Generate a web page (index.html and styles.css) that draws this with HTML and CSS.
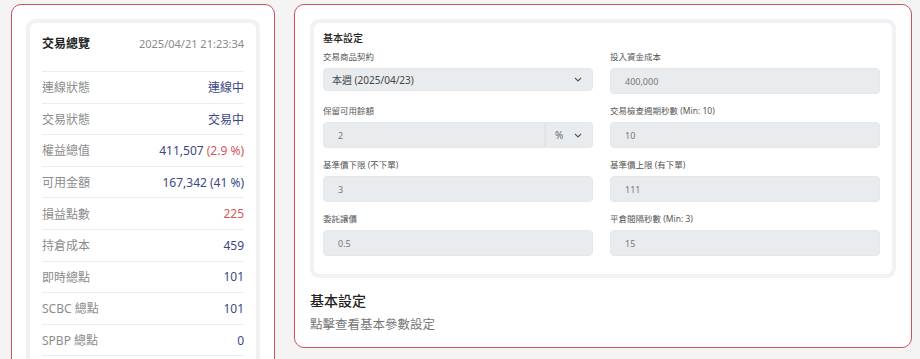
FILE: index.html
```html
<!DOCTYPE html>
<html lang="zh-Hant">
<head>
<meta charset="utf-8">
<title>交易總覽</title>
<link rel="stylesheet" href="styles.css">
</head>
<body>
<div class="page">
  <section class="card card-left">
    <div class="frame">
      <div class="panel overview">
        <div class="ov-head">
          <span class="ov-title">交易總覽</span>
          <span class="ov-time">2025/04/21 21:23:34</span>
        </div>
        <div class="ov-row"><span class="ov-label">連線狀態</span><span class="ov-value">連線中</span></div>
        <div class="ov-row"><span class="ov-label">交易狀態</span><span class="ov-value">交易中</span></div>
        <div class="ov-row"><span class="ov-label">權益總值</span><span class="ov-value">411,507 <span class="red">(2.9 %)</span></span></div>
        <div class="ov-row"><span class="ov-label">可用金額</span><span class="ov-value">167,342 (41 %)</span></div>
        <div class="ov-row"><span class="ov-label">損益點數</span><span class="ov-value red">225</span></div>
        <div class="ov-row"><span class="ov-label">持倉成本</span><span class="ov-value">459</span></div>
        <div class="ov-row"><span class="ov-label">即時總點</span><span class="ov-value">101</span></div>
        <div class="ov-row"><span class="ov-label">SCBC 總點</span><span class="ov-value">101</span></div>
        <div class="ov-row"><span class="ov-label">SPBP 總點</span><span class="ov-value">0</span></div>
        <div class="ov-row ov-spacer"></div>
      </div>
    </div>
  </section>

  <section class="card card-right">
    <div class="frame">
      <div class="panel form">
        <div class="form-title">基本設定</div>
        <div class="form-grid">
          <div class="field">
            <label class="field-label">交易商品契約</label>
            <div class="select">
              <span class="select-text">本週 (2025/04/23)</span>
              <svg class="chev" width="8" height="5" viewBox="0 0 8 5"><polyline points="1,1 4,4 7,1" fill="none" stroke="#555" stroke-width="1.1"/></svg>
            </div>
          </div>
          <div class="field">
            <label class="field-label">投入資金成本</label>
            <div class="input">400,000</div>
          </div>
          <div class="field">
            <label class="field-label">保留可用餘額</label>
            <div class="input-group">
              <div class="input ig-main">2</div>
              <div class="ig-addon">
                <span>%</span>
                <svg class="chev" width="8" height="5" viewBox="0 0 8 5"><polyline points="1,1 4,4 7,1" fill="none" stroke="#555" stroke-width="1.1"/></svg>
              </div>
            </div>
          </div>
          <div class="field">
            <label class="field-label">交易檢查週期秒數 (Min: 10)</label>
            <div class="input">10</div>
          </div>
          <div class="field">
            <label class="field-label">基準價下限 (不下單)</label>
            <div class="input">3</div>
          </div>
          <div class="field">
            <label class="field-label">基準價上限 (有下單)</label>
            <div class="input">111</div>
          </div>
          <div class="field">
            <label class="field-label">委託讓價</label>
            <div class="input">0.5</div>
          </div>
          <div class="field">
            <label class="field-label">平倉間隔秒數 (Min: 3)</label>
            <div class="input">15</div>
          </div>
        </div>
      </div>
    </div>
    <h3 class="card-title">基本設定</h3>
    <p class="card-desc">點擊查看基本參數設定</p>
  </section>
</div>
</body>
</html>
```

FILE: styles.css
```css
html, body {
  margin: 0;
  padding: 0;
  overflow: hidden;
  background: #f4f4f4;
  font-family: "Noto Sans", "Noto Sans CJK TC", sans-serif;
  color: #222;
}

.page {
  display: flex;
  align-items: flex-start;
  gap: 19px;
  padding: 4px 0 0 11px;
}

.card {
  box-sizing: border-box;
  background: #fff;
  border: 1px solid #c9525a;
  border-radius: 10px;
  padding: 14px;
}

.card-left {
  width: 264px;
}

.card-right {
  width: 618px;
  padding: 14px 15px 13px 15px;
}

.frame {
  border: 4px solid #f1f2f6;
  border-radius: 9px;
  background: #f1f2f6;
}

.panel {
  background: #fff;
  border-radius: 6px;
}

/* overview */
.overview {
  padding: 0 12px;
}

.ov-head {
  display: flex;
  justify-content: space-between;
  align-items: center;
  padding: 12px 0 18px;
  line-height: 18px;
  border-bottom: 1px solid #ededed;
}

.ov-title {
  font-size: 12px;
  font-weight: 700;
  color: #222;
}

.ov-time {
  font-size: 11px;
  color: #8a8a8a;
}

.ov-row {
  display: flex;
  justify-content: space-between;
  align-items: center;
  height: 30.6px;
  border-bottom: 1px solid #ededed;
  font-size: 12px;
}

.ov-spacer {
  border-bottom: none;
}

.ov-label {
  color: #8c8c8c;
}

.ov-value {
  color: #3a4884;
}

.red,
.ov-value.red {
  color: #d5575a;
}

/* form */
.form {
  padding: 8px 12px 18px 9px;
}

.form-title {
  font-size: 10px;
  font-weight: 500;
  line-height: 14px;
  color: #222;
  margin-bottom: 6px;
}

.form-grid {
  display: grid;
  grid-template-columns: 1fr 1fr;
  column-gap: 17px;
  row-gap: 11px;
}

.field {
  display: flex;
  flex-direction: column;
}

.field-label {
  font-size: 8.5px;
  line-height: 12px;
  color: #555;
  margin-bottom: 5px;
}

.input,
.select {
  box-sizing: border-box;
  height: 26px;
  background: #e9ecef;
  border: 1px solid #e5e8eb;
  border-radius: 4px;
  display: flex;
  align-items: center;
  font-size: 9px;
  color: #777;
}

.input {
  padding-left: 14px;
}

.select {
  height: 23px;
  padding: 0 8px;
  justify-content: space-between;
}

.select-text {
  font-size: 10px;
  color: #444;
}

.chev {
  display: block;
  margin-right: 2px;
}

.input-group {
  display: flex;
  height: 26px;
}

.ig-main {
  flex: 1;
  border-radius: 4px 0 0 4px;
}

.ig-addon {
  box-sizing: border-box;
  width: 48px;
  display: flex;
  align-items: center;
  justify-content: space-between;
  padding: 0 8px 0 9px;
  background: #e9ecef;
  border: 1px solid #e5e8eb;
  border-left: 1px solid #dde0e4;
  border-radius: 0 4px 4px 0;
  font-size: 10px;
  color: #666;
}

.card-title {
  margin: 14px 0 0;
  font-size: 14px;
  font-weight: 500;
  line-height: 18px;
  color: #222;
}

.card-desc {
  margin: 6px 0 0;
  font-size: 12.5px;
  line-height: 18px;
  color: #777;
}
```
